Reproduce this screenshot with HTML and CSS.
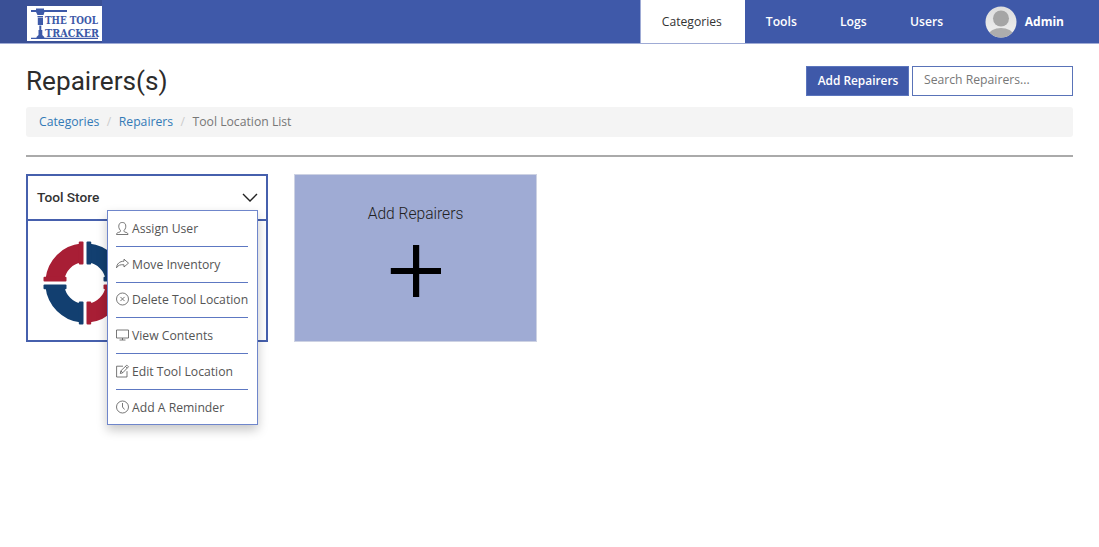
FILE: index.html
```html
<!DOCTYPE html>
<html lang="en">
<head>
<meta charset="utf-8">
<title>Repairers - The Tool Tracker</title>
<link rel="stylesheet" href="styles.css">
</head>
<body>
<header class="topbar">
  <div class="brand">
    <svg class="logo" width="75" height="35" viewBox="0 0 75 35" role="img" aria-label="The Tool Tracker">
      <rect width="75" height="35" fill="#fff"/>
      <g fill="#3d59a8">
        <path d="M4 4h5V2.500h8V4h23v2H17.500L16.500 9h-6L9 6H4z"/>
        <path d="M10.500 10h5.500v1.200h-5.500zM10.800 11.800h5.200V19h-5.200zM12.300 19.500h2V24h1v5l2 2v1H9.500v-1l2-2v-5h.8z"/>
        <path d="M4 31.800h67V33H4z"/>
        <text x="18" y="18.300" textLength="53" lengthAdjust="spacingAndGlyphs" class="logo-text">THE TOOL</text>
        <text x="18" y="30.700" textLength="54" lengthAdjust="spacingAndGlyphs" class="logo-text">TRACKER</text>
      </g>
    </svg>
  </div>
  <nav class="nav">
    <a class="tab active">Categories</a>
    <a class="tab">Tools</a>
    <a class="tab">Logs</a>
    <a class="tab">Users</a>
    <a class="account">
      <svg width="32" height="32" viewBox="0 0 32 32">
        <defs>
          <clipPath id="face"><circle cx="16" cy="16" r="15.500"/></clipPath>
          <linearGradient id="bg" x2="0" y2="1"><stop stop-color="#ddd"/><stop offset="1" stop-color="#f0f0f0"/></linearGradient>
        </defs>
        <g clip-path="url(#face)"><rect width="32" height="32" fill="url(#bg)"/><circle cx="16" cy="12.500" r="8" fill="#a5a5a5"/><ellipse cx="16" cy="29" rx="12" ry="7" fill="#adadad"/></g>
      </svg>
      <span>Admin</span>
    </a>
  </nav>
</header>
<main class="page">
  <div class="heading">
    <h1>Repairers(s)</h1>
    <div class="tools">
      <button class="add">Add Repairers</button>
      <input class="search" type="text" placeholder="Search Repairers...">
    </div>
  </div>
  <div class="crumbs"><a>Categories</a><i>/</i><a>Repairers</a><i>/</i><span>Tool Location List</span></div>
  <hr class="rule">
  <div class="cards">
    <section class="card">
      <div class="card-head">
        <h2>Tool Store</h2>
        <svg width="16" height="10" viewBox="0 0 16 10" fill="none" stroke="#222" stroke-width="1.400"><path d="M1 1l7 7 7-7"/></svg>
      </div>
      <div class="card-body">
        <svg width="84" height="84" viewBox="-42 -42 84 84">
          <defs>
            <g id="pipe">
              <path d="M-4-39.500A39.500 39.500 0 0 0-39.500-4H-20.500A20.500 20.500 0 0 1-4-20.500z"/>
              <rect x="-6.200" y="-41.500" width="4.700" height="23" rx="1"/>
              <rect x="-41.500" y="-6.200" width="23" height="4.700" rx="1"/>
            </g>
          </defs>
          <use href="#pipe" fill="#a81e35"/>
          <use href="#pipe" fill="#123f70" transform="scale(-1 1)"/>
          <use href="#pipe" fill="#123f70" transform="scale(1 -1)"/>
          <use href="#pipe" fill="#a81e35" transform="scale(-1 -1)"/>
        </svg>
      </div>
      <ul class="menu">
        <li><svg class="ico" viewBox="0 0 13 13"><path d="M4.500 8.500C2.700 6.700 2.500 4.500 3 2.800 3.500.9 5 .5 6.300.5s2.800.4 3.300 2.300C10 4.500 9.900 6.700 8 8.500c0 1.300.3 1.500 2 1.900 1.300.3 2 .9 2 2.100H.5c0-1.200.8-1.800 2-2.100 1.700-.4 2-.6 2-1.900z"/></svg>Assign User</li>
        <li><svg class="ico" viewBox="0 0 13 13"><path d="M8 1.200l4.500 3.900L8 9V6.800C4.500 6.500 2.200 7 .5 9.800.8 5.800 3.600 3.300 8 3.200z"/></svg>Move Inventory</li>
        <li><svg class="ico" viewBox="0 0 13 13"><circle cx="6.500" cy="6" r="6"/><path d="M4.400 3.900l4.200 4.200m0-4.200L4.400 8.100"/></svg>Delete Tool Location</li>
        <li><svg class="ico" viewBox="0 0 13 13"><path d="M.5 1h12v8H.5zM6.500 9v2M3.500 11h6"/></svg>View Contents</li>
        <li><svg class="ico" viewBox="0 0 13 13"><path d="M7 1.200H.6V12H11V6.200M4.300 8.500l.6-2.700L10.800.1l1.700 1.700-5.800 6zM4.900 5.800l1.800 2M9.500 1.400l1.700 1.700"/></svg>Edit Tool Location</li>
        <li><svg class="ico" viewBox="0 0 13 13"><circle cx="6.500" cy="6" r="6"/><path d="M6.500 2v4l2 2.500"/></svg>Add A Reminder</li>
      </ul>
    </section>
    <section class="new-card">
      <h3>Add Repairers</h3>
      <svg width="52" height="54" viewBox="0 0 52 54"><path d="M23 1h6.200v23H51v6H29.200v23H23V30H.8v-6H23z"/></svg>
    </section>
  </div>
</main>
</body>
</html>
```

FILE: styles.css
```css
* { box-sizing: border-box; }
body { margin: 0; min-height: 547px; background: #fff; font-family: "Open Sans", sans-serif; font-size: 12.200px; color: #333; }
h1, h2, h3, ul { margin: 0; padding: 0; }
.topbar { height: 44px; display: flex; justify-content: space-between; background: #3f59a9; border-bottom: 1px solid #9fabd5; }
.brand { width: 102px; padding: 6px 0 0 27px; background: #3a5096; }
.logo { display: block; overflow: visible; }
.logo-text { font: bold 11.800px "DejaVu Serif", serif; }
.nav { display: flex; padding-right: 35px; font-size: 12.150px; }
.tab { display: flex; align-items: center; padding: 0 21.700px; color: #fff; font-weight: 600; }
.tab.active { width: 105px; padding: 0 0 0 21px; background: #fff; color: #333; font-weight: 400; border-left: 1px solid #9fabd5; }
.nav .tab:nth-child(2) { padding: 0 21.500px 0 21px; }
.account { display: flex; align-items: center; gap: 7.500px; padding-left: 20.500px; color: #fff; font-weight: 700; font-size: 12px; }
.page { min-height: 503px; padding: 22px 26px 0; }
.heading { display: flex; justify-content: space-between; height: 41px; }
h1 { font: 400 26.150px/31px Roboto, sans-serif; color: #2c2c2c; }
.tools { display: flex; gap: 3px; height: 30px; }
.add { width: 103px; padding: 0 0 2px 1px; border: 1px solid #5b75bd; background: #3f59a9; color: #fff; font: 600 11.900px "Open Sans", sans-serif; }
.search { width: 161px; padding: 0 11px 3px; border: 1px solid #5973b8; font: 12.200px "Open Sans", sans-serif; outline: 0; }
.search::placeholder { color: #777; }
.crumbs { display: flex; align-items: center; height: 30px; padding: 0 13px 1px; border-radius: 3px; background: #f4f4f4; color: #777; }
.crumbs a { color: #337ab7; }
.crumbs i { padding: 0 7.500px; color: #ccc; font-style: normal; }
.rule { height: 2px; margin: 18px 0 17px; border: 0; background: #aaa; }
.cards { display: flex; gap: 26px; }
.card { position: relative; width: 242px; height: 168px; border: 2px solid #4660ad; }
.card-head { display: flex; align-items: center; justify-content: space-between; height: 45px; padding: 0 8px 0 9px; border-bottom: 2px solid #4660ad; }
h2 { font: 500 13.700px Roboto, sans-serif; color: #333; padding-bottom: 1px; }
.card-body { padding: 19.500px 14.500px; }
.card-body svg { display: block; }
.menu { position: absolute; top: 34px; left: 79px; width: 151px; height: 215px; padding: 0 9px 0 8px; list-style: none; background: #fff; border: 1px solid #6f86cb; box-shadow: 0 5px 10px rgba(0, 0, 0, .22); color: #555; }
.menu li { display: flex; align-items: center; gap: 3px; height: 35.800px; border-bottom: 1px solid #5d78c2; white-space: nowrap; }
.menu li:last-child { border: 0; }
.ico { width: 13px; height: 13px; fill: none; stroke: #555; stroke-width: .8; flex: none; overflow: visible; }
.new-card { display: flex; flex-direction: column; align-items: center; width: 243px; height: 168px; padding-top: 29px; border: 1px solid #cdd2e3; background: #9fabd4; }
h3 { font: 300 15.600px/20px Roboto, sans-serif; color: #222; margin-bottom: 20px; }
```
